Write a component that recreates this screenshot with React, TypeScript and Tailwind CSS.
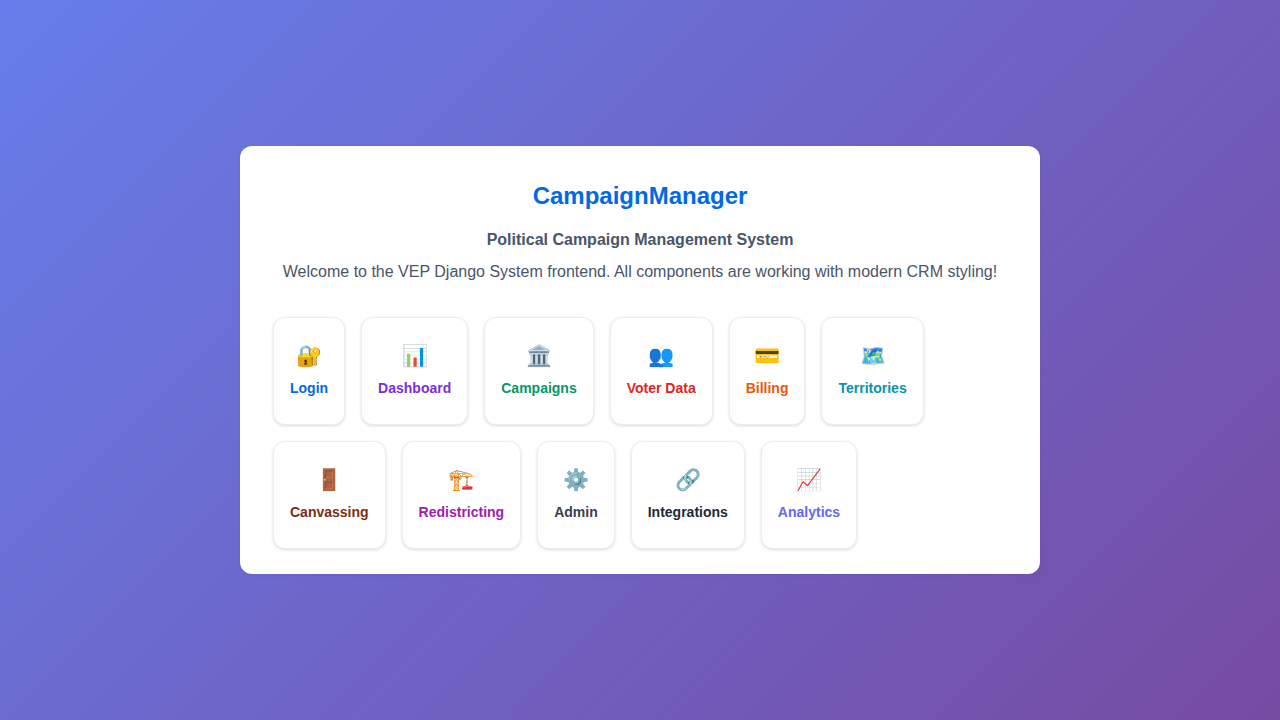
const links = [
  { icon: '🔐', label: 'Login', color: 'text-[#0069e6]' },
  { icon: '📊', label: 'Dashboard', color: 'text-[#7c2fd9]' },
  { icon: '🏛️', label: 'Campaigns', color: 'text-[#059669]' },
  { icon: '👥', label: 'Voter Data', color: 'text-[#dc2626]' },
  { icon: '💳', label: 'Billing', color: 'text-[#ea580c]' },
  { icon: '🗺️', label: 'Territories', color: 'text-[#0891b2]' },
  { icon: '🚪', label: 'Canvassing', color: 'text-[#7c2d12]' },
  { icon: '🏗️', label: 'Redistricting', color: 'text-[#a21caf]' },
  { icon: '⚙️', label: 'Admin', color: 'text-[#374151]' },
  { icon: '🔗', label: 'Integrations', color: 'text-[#1f2937]' },
  { icon: '📈', label: 'Analytics', color: 'text-[#6366f1]' },
];

export default function App() {
  return (
    <div className="flex h-screen items-center justify-center bg-[linear-gradient(135deg,#667eea_0%,#764ba2_100%)] font-['Liberation_Sans',sans-serif]">
      <div className="w-[800px] rounded-xl bg-white px-8 pt-8 pb-[25px] shadow-[0_1px_4px_rgba(0,0,0,0.05)]">
        <h1 className="text-center text-2xl leading-9 font-bold text-[#0069e6]">CampaignManager</h1>
        <p className="mt-[14px] text-center text-base leading-6 font-bold text-[#4a5568]">
          Political Campaign Management System
        </p>
        <p className="mt-2 text-center text-base leading-6 text-[#4a5568]">
          Welcome to the VEP Django System frontend. All components are working with modern CRM styling!
        </p>

        {/* Links */}
        <div className="mt-[33px] flex flex-wrap gap-4 pl-px">
          {links.map((link) => (
            <a
              key={link.label}
              className="flex h-[108px] flex-col items-center rounded-xl border border-[#eceef1] bg-white px-4 pt-[22px] shadow-[0_1px_3px_rgba(0,0,0,0.14)]"
            >
              <span className="text-[21px] leading-8">{link.icon}</span>
              <span className={`mt-[6px] text-sm leading-5 font-bold ${link.color}`}>{link.label}</span>
            </a>
          ))}
        </div>
      </div>
    </div>
  );
}
